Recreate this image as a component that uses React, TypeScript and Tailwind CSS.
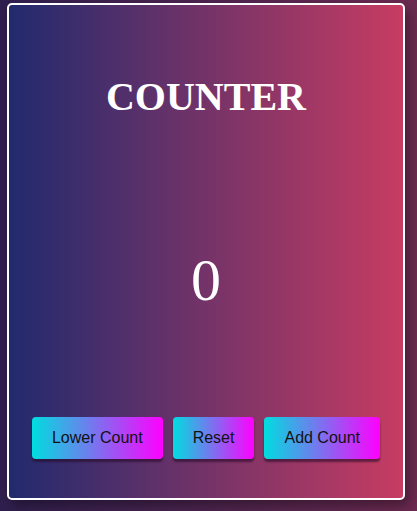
export default function App() {
  return (
    <div className="w-[417px] h-[511px] bg-[linear-gradient(to_right,#2f1f4e,#6c2a50)] pt-[3px] pl-[7px]">
      <div className="w-[398px] h-[497px] rounded-[5px] border-2 border-white bg-[linear-gradient(to_right,#212a6e,#c73c62)] shadow-[4px_6px_12px_rgba(0,0,0,0.35)] flex flex-col items-center">
        <h1 className="mt-[62px] text-[40px] font-bold text-white font-['Liberation_Serif',serif]">
          COUNTER
        </h1>
        <div className="flex-1 flex items-center justify-center pt-[16px]">
          <span className="text-[60px] text-white font-['Liberation_Serif',serif]">0</span>
        </div>
        <div className="mb-[39px] flex gap-[10px] font-['Liberation_Sans',sans-serif] text-base text-[#111]">
          <button className="h-[42px] px-5 rounded-[4px] bg-[linear-gradient(to_right,#00dde0,#ff00ff)] shadow-[0_3px_2px_rgba(40,10,40,0.6)]">
            Lower Count
          </button>
          <button className="h-[42px] px-5 rounded-[4px] bg-[linear-gradient(to_right,#00dde0,#ff00ff)] shadow-[0_3px_2px_rgba(40,10,40,0.6)]">
            Reset
          </button>
          <button className="h-[42px] px-5 rounded-[4px] bg-[linear-gradient(to_right,#00dde0,#ff00ff)] shadow-[0_3px_2px_rgba(40,10,40,0.6)]">
            Add Count
          </button>
        </div>
      </div>
    </div>
  )
}
